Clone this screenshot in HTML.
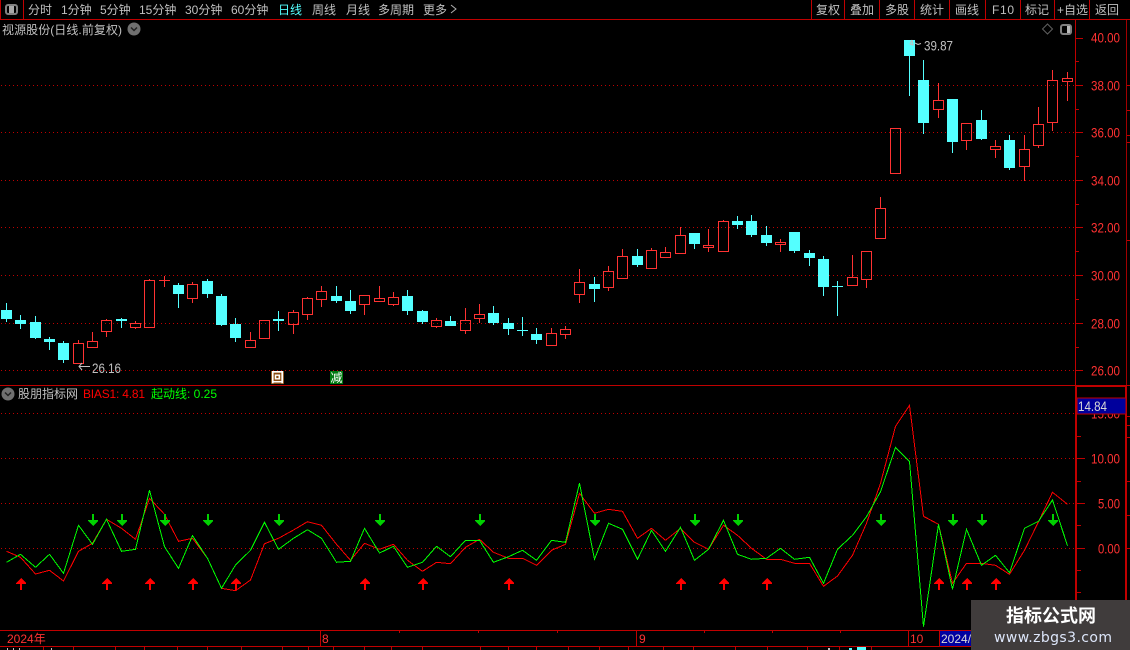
<!DOCTYPE html>
<html><head><meta charset="utf-8"><title>K线</title>
<style>
html,body{margin:0;padding:0;background:#000;width:1130px;height:650px;overflow:hidden}
svg{display:block}
text{font-family:"WenQuanYi Zen Hei","Liberation Sans","Noto Sans CJK SC",sans-serif;font-size:12px}
.g{fill:#c0c0c0}.r{fill:#ff3232}
.n{font-size:14px}
</style></head><body>
<svg width="1130" height="650" viewBox="0 0 1130 650" xmlns="http://www.w3.org/2000/svg">
<defs>
<path id="dn" d="M-1 514h2v6h4v1l-5 5l-5-5v-1h4z" fill="#00d000" shape-rendering="crispEdges"/>
<path id="up" d="M-1 590h2v-6h4v-1l-5-5l-5 5v1h4z" fill="#f00" shape-rendering="crispEdges"/>
</defs>
<rect width="1130" height="650" fill="#000"/>
<!-- grid -->
<g stroke="#c00000" stroke-dasharray="1 3" shape-rendering="crispEdges" fill="none">
<path d="M1 85.500H1075M1 132.500H1075M1 180.500H1075M1 227.500H1075M1 275.500H1075M1 323.500H1075M1 370.500H1075M1 413.500H1075M1 458.500H1075M1 503.500H1075M1 548.500H1075"/>
</g>
<!-- frame -->
<g stroke="#c00000" fill="none" shape-rendering="crispEdges">
<path d="M0 19.500H1130M0.500 0V19M23.500 0V19M811.500 0V19M844.500 0V19M879.500 0V19M914.500 0V19M949.500 0V19M985.500 0V19M1020.500 0V19M1054.500 0V19M1089.500 0V19"/>
<path d="M1075.500 19V385M0 385.500H1130M0 630.500H971M0 646.500H971"/>
<path d="M1076 385V600" stroke-width="2"/>
<path d="M1126.500 20V385" stroke="#a00000"/>
<path d="M1126 385V600" stroke-width="2"/>
<path d="M1076 386H1126" stroke-width="2"/>
<path d="M1075 38.500h8M1075 85.500h8M1075 132.500h8M1075 180.500h8M1075 227.500h8M1075 275.500h8M1075 323.500h8M1075 370.500h8M1075 61.500h4M1075 109.500h4M1075 156.500h4M1075 204.500h4M1075 251.500h4M1075 299.500h4M1075 347.500h4"/>
<path d="M1077 458.500h8M1077 503.500h8M1077 548.500h8M1077 436.500h4M1077 481.500h4M1077 525.500h4M1077 570.500h4M1077 592.500h4"/>
<path d="M1127 85.500h3M1127 110.500h3M1127 135.500h3M1127 142.500h3M1127 240.500h3M1127 416.500h3M1127 425.500h3M1127 437.500h3M1127 481.500h3M1127 515.500h3M1127 548.500h3"/>
<path d="M320.500 630V646M636.500 630V646M908.500 630V646M939.500 630V646M399.500 630v3M478.500 630v3M557.500 630v3M704.500 630v3M772.500 630v3M840.500 630v3"/>
<path d="M43.500 647v3M73.500 647v3M115.500 647v3M144.500 647v3M177.500 647v3M207.500 647v3M241.500 647v3M282.500 647v3M308.500 647v3M333.500 647v3M364.500 647v3M391.500 647v3M422.500 647v3M480.500 647v3M508.500 647v3M536.500 647v3M568.500 647v3M599.500 647v3M628.500 647v3M663.500 647v3M693.500 647v3M735.500 647v3M767.500 647v3M807.500 647v3M839.500 647v3M871.500 647v3"/>
</g>
<g shape-rendering="crispEdges">
<rect x="7" y="648" width="1" height="2" fill="#c0c0c0"/><rect x="13" y="648" width="1" height="2" fill="#c0c0c0"/><rect x="19" y="648" width="1" height="2" fill="#c0c0c0"/><rect x="51" y="648" width="1" height="2" fill="#c0c0c0"/><rect x="828" y="648" width="2" height="2" fill="#c0c0c0"/>
<rect x="849" y="648" width="3" height="2" fill="#54ffff"/><rect x="857" y="647" width="9" height="3" fill="#54ffff"/>
</g>
<!-- header text -->
<g class="g">
<text class="g" x="28" y="14">分时</text>
<text class="g" x="61" y="14">1分钟</text>
<text class="g" x="100" y="14">5分钟</text>
<text class="g" x="139" y="14">15分钟</text>
<text class="g" x="185" y="14">30分钟</text>
<text class="g" x="231" y="14">60分钟</text>
<text x="278" y="14" fill="#54ffff">日线</text>
<text class="g" x="312" y="14">周线</text>
<text class="g" x="346" y="14">月线</text>
<text class="g" x="378" y="14">多周期</text>
<text class="g" x="423" y="14">更多</text>
<text class="g" x="816" y="14">复权</text>
<text class="g" x="850" y="14">叠加</text>
<text class="g" x="885" y="14">多股</text>
<text class="g" x="920" y="14">统计</text>
<text class="g" x="955" y="14">画线</text>
<text class="g" x="992" y="14" textLength="22">F10</text>
<text class="g" x="1025" y="14">标记</text>
<text class="g" x="1057" y="14">+自选</text>
<text class="g" x="1095" y="14">返回</text>
<text class="g" x="2" y="34" textLength="120">视源股份(日线.前复权)</text>
<text class="g" x="18" y="398">股朋指标网</text>
</g>
<path d="M451 5l5 4l-5 4" fill="none" stroke="#b0b0b0"/>
<text x="83" y="398" fill="#f00" textLength="62">BIAS1: 4.81</text>
<text x="151" y="398" fill="#0f0">起动线: 0.25</text>
<!-- small icons -->
<g fill="none">
<rect x="6" y="5" width="11" height="9" rx="2" stroke="#808080" stroke-width="2"/><rect x="9" y="6" width="5" height="7" fill="#a8a8a8"/>
<rect x="1061" y="25" width="10" height="9" rx="2" stroke="#808080" stroke-width="2"/><rect x="1067" y="26" width="3" height="7" fill="#b8b8b8"/>
<path d="M1047.500 24l5 5l-5 5l-5-5z" stroke="#606060"/>
<circle cx="134" cy="29" r="6.500" fill="#707070"/><path d="M131 27.500l3 3l3-3" stroke="#222" stroke-width="1.500"/>
<circle cx="8" cy="394" r="6.500" fill="#707070"/><path d="M5 392.500l3 3l3-3" stroke="#222" stroke-width="1.500"/>
</g>
<!-- cyan candles -->
<path fill="#54ffff" shape-rendering="crispEdges" d="M6 303h1V322h-1zM1 310h11V319h-11z
M20 315h1V329h-1zM15 320h11V324h-11z
M35 316h1V339h-1zM30 322h11V338h-11z
M49 337h1V350h-1zM44 339h11V342h-11z
M63 341h1V363h-1zM58 343h11V360h-11z
M121 318h1V328h-1zM116 319h11V321h-11z
M178 283h1V308h-1zM173 285h11V294h-11z
M207 279h1V298h-1zM202 281h11V294h-11z
M221 294h1V326h-1zM216 296h11V325h-11z
M235 318h1V342h-1zM230 324h11V338h-11z
M278 311h1V331h-1zM273 319h11V321h-11z
M336 286h1V303h-1zM331 296h11V301h-11z
M350 290h1V314h-1zM345 301h11V311h-11z
M407 290h1V315h-1zM402 296h11V311h-11z
M422 310h1V324h-1zM417 311h11V322h-11z
M450 316h1V326h-1zM445 321h11V326h-11z
M493 306h1V325h-1zM488 313h11V323h-11z
M508 318h1V335h-1zM503 323h11V329h-11z
M522 317h1V336h-1zM517 330h11V331h-11z
M536 328h1V344h-1zM531 334h11V340h-11z
M594 277h1V302h-1zM589 284h11V289h-11z
M637 249h1V267h-1zM632 256h11V265h-11z
M694 233h1V249h-1zM689 233h11V244h-11z
M737 216h1V229h-1zM732 221h11V225h-11z
M751 215h1V237h-1zM746 221h11V235h-11z
M766 226h1V246h-1zM761 235h11V243h-11z
M794 232h1V253h-1zM789 232h11V251h-11z
M809 250h1V266h-1zM804 253h11V258h-11z
M823 256h1V296h-1zM818 259h11V287h-11z
M837 281h1V316h-1zM832 286h11V287h-11z
M909 40h1V96h-1zM904 40h11V56h-11z
M923 60h1V134h-1zM918 80h11V123h-11z
M952 99h1V153h-1zM947 99h11V142h-11z
M981 110h1V140h-1zM976 120h11V139h-11z
M1009 135h1V170h-1zM1004 140h11V168h-11z"/>
<!-- red candles -->
<path fill="none" stroke="#ff3232" shape-rendering="crispEdges" d="M78.500 340V343M73.500 343.500h10V363.500h-10z
M92.500 332V341M87.500 341.500h10V347.500h-10zM92.500 347V348
M106.500 319V320M101.500 320.500h10V331.500h-10zM106.500 331V337
M135.500 321V323M130.500 323.500h10V327.500h-10zM135.500 327V329
M149.500 279V280M144.500 280.500h10V327.500h-10z
M164.500 276V287M159 280.500h11
M192.500 282V284M187.500 284.500h10V298.500h-10zM192.500 298V303
M250.500 332V340M245.500 340.500h10V347.500h-10z
M259.500 320.500h10V338.500h-10zM264.500 338V339
M293.500 310V312M288.500 312.500h10V324.500h-10zM293.500 324V334
M307.500 297V298M302.500 298.500h10V314.500h-10zM307.500 314V320
M321.500 286V291M316.500 291.500h10V299.500h-10zM321.500 299V307
M359.500 295.500h10V304.500h-10zM364.500 304V315
M379.500 286V298M374.500 298.500h10V301.500h-10z
M393.500 292V297M388.500 297.500h10V304.500h-10zM393.500 304V306
M436.500 318V320M431.500 320.500h10V326.500h-10zM436.500 326V328
M465.500 308V320M460.500 320.500h10V330.500h-10zM465.500 330V334
M479.500 304V314M474.500 314.500h10V318.500h-10zM479.500 318V323
M551.500 328V333M546.500 333.500h10V345.500h-10z
M565.500 326V329M560.500 329.500h10V334.500h-10zM565.500 334V339
M579.500 269V282M574.500 282.500h10V294.500h-10zM579.500 294V303
M608.500 266V271M603.500 271.500h10V287.500h-10zM608.500 287V291
M622.500 249V256M617.500 256.500h10V278.500h-10z
M651.500 248V250M646.500 250.500h10V268.500h-10zM651.500 268V269
M665.500 247V252M660.500 252.500h10V257.500h-10zM665.500 257V258
M680.500 227V235M675.500 235.500h10V253.500h-10z
M708.500 229V245M703.500 245.500h10V247.500h-10zM708.500 247V252
M723.500 220V221M718.500 221.500h10V251.500h-10z
M780.500 239V242M775.500 242.500h10V244.500h-10zM780.500 244V252
M852.500 255V277M847.500 277.500h10V285.500h-10z
M861.500 251.500h10V279.500h-10zM866.500 279V288
M880.500 197V208M875.500 208.500h10V238.500h-10zM880.500 238V239
M890.500 128.500h10V173.500h-10z
M938.500 83V100M933.500 100.500h10V109.500h-10zM938.500 109V118
M961.500 123.500h10V140.500h-10zM966.500 140V150
M995.500 140V146M990.500 146.500h10V149.500h-10zM995.500 149V158
M1024.500 135V149M1019.500 149.500h10V166.500h-10zM1024.500 166V181
M1038.500 107V124M1033.500 124.500h10V145.500h-10zM1038.500 145V148
M1052.500 70V80M1047.500 80.500h10V122.500h-10zM1052.500 122V131
M1067.500 72V78M1062.500 78.500h10V81.500h-10zM1067.500 81V101"/>
<!-- annotations -->
<path d="M90 366.500H79M82 363l-3 3.500l3 3.500" fill="none" stroke="#c0c0c0"/>
<text class="g n" x="92" y="373" textLength="29" lengthAdjust="spacingAndGlyphs">26.16</text>
<path d="M912 40l-2 4l3 1l-1-5M915 43l3 1.500l3-1" fill="none" stroke="#c0c0c0"/>
<text class="g n" x="924" y="50.500" textLength="29" lengthAdjust="spacingAndGlyphs">39.87</text>
<rect x="271" y="371" width="13" height="13" fill="#8a4a10"/>
<text x="271" y="382" fill="#fff" font-weight="bold" style="font-size:13px">回</text>
<rect x="330" y="371" width="13" height="13" fill="#007a10"/>
<text x="330.500" y="382" fill="#fff">减</text>
<!-- axis labels -->
<g>
<text class="r n" x="1091" y="42.500" textLength="29" lengthAdjust="spacingAndGlyphs">40.00</text>
<text class="r n" x="1091" y="90.500" textLength="29" lengthAdjust="spacingAndGlyphs">38.00</text>
<text class="r n" x="1091" y="137.500" textLength="29" lengthAdjust="spacingAndGlyphs">36.00</text>
<text class="r n" x="1091" y="185.500" textLength="29" lengthAdjust="spacingAndGlyphs">34.00</text>
<text class="r n" x="1091" y="232.500" textLength="29" lengthAdjust="spacingAndGlyphs">32.00</text>
<text class="r n" x="1091" y="280.500" textLength="29" lengthAdjust="spacingAndGlyphs">30.00</text>
<text class="r n" x="1091" y="328.500" textLength="29" lengthAdjust="spacingAndGlyphs">28.00</text>
<text class="r n" x="1091" y="375.500" textLength="29" lengthAdjust="spacingAndGlyphs">26.00</text>
<text class="r n" x="1091" y="418.500" textLength="29" lengthAdjust="spacingAndGlyphs">15.00</text>
<text class="r n" x="1091" y="463.500" textLength="29" lengthAdjust="spacingAndGlyphs">10.00</text>
<text class="r n" x="1098" y="508.500" textLength="22" lengthAdjust="spacingAndGlyphs">5.00</text>
<text class="r n" x="1098" y="553.500" textLength="22" lengthAdjust="spacingAndGlyphs">0.00</text>
</g>
<rect x="1077" y="398" width="49" height="16" fill="#00009c" stroke="#c00000" shape-rendering="crispEdges"/>
<text class="n" x="1078" y="411" fill="#d8d8d8" textLength="29" lengthAdjust="spacingAndGlyphs">14.84</text>
<!-- indicator lines -->
<polyline fill="none" stroke="#f00" shape-rendering="crispEdges" points="6.500,551.300 20.500,557.300 35.500,574 49.500,570.300 63.500,581 78.500,551.300 92.500,543.300 106.500,519.300 121.500,528.300 135.500,539.300 149.500,498.300 164.500,514.300 178.500,541.300 192.500,538.300 207.500,558.300 221.500,588.300 235.500,590.700 250.500,580 264.500,543.700 278.500,538.300 293.500,530 307.500,521.700 321.500,525.300 336.500,544.300 350.500,560.300 364.500,543.300 379.500,549.300 393.500,544.300 407.500,560.300 422.500,571.300 436.500,562.300 450.500,563.700 465.500,547.300 479.500,539.300 493.500,552.300 508.500,558.300 522.500,558.300 536.500,565.300 551.500,550.300 565.500,544.300 579.500,493.300 594.500,513.300 608.500,509.300 622.500,511.300 637.500,538.300 651.500,528.300 665.500,540.300 680.500,528.300 694.500,542.300 708.500,549.300 723.500,525.300 737.500,535.300 751.500,548.300 766.500,559.300 780.500,559.300 794.500,563.300 809.500,563.300 823.500,586.300 837.500,576 852.500,555.300 866.500,523.300 880.500,483.300 895.500,426.300 909.500,405.300 923.500,516.300 938.500,524.300 952.500,583.300 966.500,563.300 981.500,563.300 995.500,565.300 1009.500,574.300 1024.500,550.300 1038.500,521.700 1052.500,492.300 1067.500,504.300"/>
<polyline fill="none" stroke="#0f0" shape-rendering="crispEdges" points="6.500,562.300 20.500,554.300 35.500,567.300 49.500,554.300 63.500,573.300 78.500,525.300 92.500,544.300 106.500,519.300 121.500,551.300 135.500,549.300 149.500,490.300 164.500,546.700 178.500,568.300 192.500,535.700 207.500,558.300 221.500,588.300 235.500,565 250.500,550.300 264.500,522.300 278.500,549.300 293.500,538.300 307.500,529.700 321.500,538.300 336.500,562.300 350.500,561.300 364.500,528.300 379.500,553 393.500,546.300 407.500,567.300 422.500,562.300 436.500,546.300 450.500,556.700 465.500,540.300 479.500,540.300 493.500,562.300 508.500,556.700 522.500,550.300 536.500,560.300 551.500,540.300 565.500,542.300 579.500,483.300 594.500,559.300 608.500,523.300 622.500,529.300 637.500,559.300 651.500,530.300 665.500,551.300 680.500,527.300 694.500,560.300 708.500,549.300 723.500,520.300 737.500,554.300 751.500,559.300 766.500,558.300 780.500,548.300 794.500,559.300 809.500,557.300 823.500,583.300 837.500,549.300 852.500,535.300 866.500,516.700 880.500,491.700 895.500,447.300 909.500,461.300 923.500,626.700 938.500,524.300 952.500,589.300 966.500,529.300 981.500,565.300 995.500,555.300 1009.500,572.700 1024.500,528.300 1038.500,521.300 1052.500,500 1067.500,545.700"/>
<!-- arrows -->
<use href="#dn" x="93"/><use href="#dn" x="122"/><use href="#dn" x="165"/><use href="#dn" x="208"/><use href="#dn" x="279"/><use href="#dn" x="380"/><use href="#dn" x="480"/><use href="#dn" x="595"/><use href="#dn" x="695"/><use href="#dn" x="738"/><use href="#dn" x="881"/><use href="#dn" x="953"/><use href="#dn" x="982"/><use href="#dn" x="1053"/>
<use href="#up" x="21"/><use href="#up" x="107"/><use href="#up" x="150"/><use href="#up" x="193"/><use href="#up" x="236"/><use href="#up" x="365"/><use href="#up" x="423"/><use href="#up" x="509"/><use href="#up" x="681"/><use href="#up" x="724"/><use href="#up" x="767"/><use href="#up" x="939"/><use href="#up" x="967"/><use href="#up" x="996"/>
<!-- date row -->
<text class="r" x="7" y="643">2024年</text>
<text class="r" x="322" y="643">8</text>
<text class="r" x="639" y="643">9</text>
<text class="r" x="910" y="643">10</text>
<rect x="940" y="631" width="31" height="15" fill="#0000a0"/>
<text x="941" y="643" fill="#d8d8d8">2024/</text>
<!-- watermark -->
<rect x="971" y="600" width="159" height="50" fill="#403c3c"/>
<text x="1006" y="622" fill="#fff" style="font-family:'Noto Sans CJK SC','WenQuanYi Zen Hei',sans-serif;font-size:18px;font-weight:bold" textLength="90">指标公式网</text>
<text x="994" y="642" fill="#dde6fa" style="font-family:'DejaVu Sans','Liberation Sans',sans-serif;font-size:14px" textLength="118">www.zbgs3.com</text>
</svg>
</body></html>
